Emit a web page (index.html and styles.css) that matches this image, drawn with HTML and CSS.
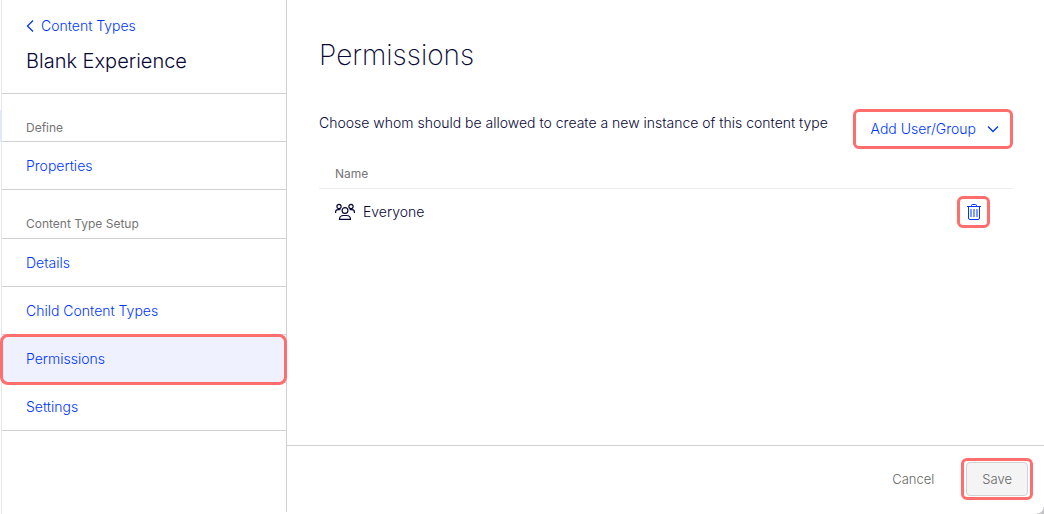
FILE: index.html
```html
<!DOCTYPE html>
<html lang="en">
<head>
    <meta charset="utf-8">
    <title>Blank Experience - Permissions</title>
    <link rel="stylesheet" href="styles.css">
</head>
<body>
    <div class="page">
        <aside class="sidebar">
            <header class="sidebar-header">
                <a class="back-link" href="#">
                    <svg class="icon-back" viewBox="0 0 8 12"><path d="M7 .5 1.500 6 7 11.500"/></svg>
                    Content Types
                </a>
                <h2 class="type-name">Blank Experience</h2>
            </header>
            <nav>
                <h3 class="nav-title">Define</h3>
                <a class="nav-item" href="#">Properties</a>
                <h3 class="nav-title nav-title-setup">Content Type Setup</h3>
                <a class="nav-item" href="#">Details</a>
                <a class="nav-item" href="#">Child Content Types</a>
                <a class="nav-item active" href="#">Permissions</a>
                <a class="nav-item" href="#">Settings</a>
            </nav>
        </aside>
        <main class="main">
            <div class="content">
                <h1>Permissions</h1>
                <div class="intro">
                    <p>Choose whom should be allowed to create a new instance of this content type</p>
                    <button type="button" class="add-button marked">
                        Add User/Group
                        <svg class="icon-down" viewBox="0 0 12 8"><path d="M1 1.500l5 5 5-5"/></svg>
                    </button>
                </div>
                <table class="users">
                    <thead>
                        <tr>
                            <th>Name</th>
                            <th></th>
                        </tr>
                    </thead>
                    <tbody>
                        <tr>
                            <td>
                                <div class="user">
                                    <svg class="icon-group" viewBox="0 0 20 18">
                                        <circle cx="4" cy="3.500" r="2.100"/>
                                        <circle cx="16" cy="3.500" r="2.100"/>
                                        <circle cx="10" cy="7.500" r="2.900"/>
                                        <path d="M.6 10V9c0-1.400 1-2.400 2.400-2.400h2.400M19.400 10V9c0-1.400-1-2.400-2.400-2.400h-2.400M4.500 16.400c0-2.500 1.800-3.900 4-3.900h3c2.200 0 4 1.400 4 3.900z"/>
                                    </svg>
                                    Everyone
                                </div>
                            </td>
                            <td class="actions">
                                <button type="button" class="delete-button marked" aria-label="Delete">
                                    <svg class="icon-trash" viewBox="0 0 14 16">
                                        <path d="M0 2.500h14M4.500 2.500V1.500q0-1 1-1h3q1 0 1 1v1M1.500 2.500v11.500q0 1.500 1.500 1.500h8q1.500 0 1.500-1.500V2.500"/>
                                        <path class="slats" d="M4 5v8M7 5v8M10 5v8"/>
                                    </svg>
                                </button>
                            </td>
                        </tr>
                    </tbody>
                </table>
            </div>
            <footer class="footer">
                <button type="button" class="cancel-button">Cancel</button>
                <div class="save-box marked">
                    <button type="button" class="save-button">Save</button>
                </div>
            </footer>
        </main>
    </div>
</body>
</html>
```

FILE: styles.css
```css
* {
    box-sizing: border-box;
}

body {
    margin: 0;
    font-family: Inter, "Liberation Sans", sans-serif;
    font-size: 14px;
    font-weight: 300;
    line-height: 20px;
    color: #080736;
    background-color: #fff;
}

h1, h2, h3, p {
    margin: 0;
    font-weight: 300;
}

a {
    color: #0037ff;
    text-decoration: none;
}

button {
    font: inherit;
    background: none;
    border: none;
    padding: 0;
    cursor: pointer;
}

svg {
    fill: none;
    stroke: currentColor;
}

.page {
    position: relative;
    display: flex;
    min-height: 100vh;
    margin-left: 1px;
    padding-bottom: 2px;
    border-left: 1px solid #e5e6ea;
}

/* edge of the selected item in the panel behind */
.page::before {
    content: "";
    position: absolute;
    top: 110px;
    left: -2px;
    width: 2px;
    height: 32px;
    background-color: #e3e8ff;
}

/* resize corner */
.page::after {
    content: "";
    position: absolute;
    right: 0;
    bottom: 0;
    width: 7px;
    height: 7px;
    background: radial-gradient(circle at 0 0, transparent 6px, #c4c4c6 7px);
}

.sidebar {
    width: 285px;
    flex-shrink: 0;
    border-right: 1px solid #d0d1d3;
}

.sidebar-header {
    padding: 16px 24px 18px;
    border-bottom: 1px solid #d0d1d3;
}

.back-link {
    display: flex;
    align-items: center;
    gap: 7px;
}

.icon-back {
    width: 8px;
    height: 12px;
    stroke-width: 1.3;
}

.type-name {
    margin-top: 11px;
    font-size: 20px;
    line-height: 28px;
}

.nav-title {
    height: 48px;
    padding: 24px 24px 0;
    font-size: 12px;
    font-weight: 400;
    color: #757575;
    border-bottom: 1px solid #d0d1d3;
}

.nav-title-setup {
    height: 49px;
}

.nav-item {
    position: relative;
    display: block;
    height: 48px;
    padding: 14px 24px;
    border-bottom: 1px solid #d0d1d3;
}

.active {
    background-color: #eff1ff;
}

.active::after {
    content: "";
    position: absolute;
    inset: -1px -1px -3px -2px;
    border: 3px solid #ff6d6d;
    border-radius: 8px;
}

.marked {
    border: 3px solid #ff6d6d;
    border-radius: 6px;
}

.main {
    flex: 1;
    display: flex;
    flex-direction: column;
}

.content {
    flex: 1;
    padding: 35px 31px 0 32px;
}

h1 {
    font-size: 28px;
    font-weight: 200;
    line-height: 40px;
}

.intro {
    display: flex;
    justify-content: space-between;
    align-items: flex-start;
    margin-top: 34px;
}

.intro p {
    margin-top: 4px;
}

.add-button {
    display: flex;
    align-items: center;
    gap: 11px;
    height: 40px;
    padding: 0 11px 0 15px;
    color: #0037ff;
}

.icon-down {
    width: 12px;
    height: 8px;
    stroke-width: 1.3;
}

.users {
    width: 100%;
    margin-top: 12px;
    border-collapse: collapse;
}

.users th {
    height: 27px;
    padding: 0 16px;
    font-size: 12px;
    font-weight: 400;
    text-align: left;
    color: #757575;
    border-bottom: 1px solid #eeeef0;
}

.users td {
    height: 48px;
    padding: 0 16px;
}

.user {
    display: flex;
    align-items: center;
    gap: 8px;
}

.icon-group {
    width: 20px;
    height: 18px;
    stroke-width: 1.2;
}

.users .actions {
    padding-right: 23px;
}

.delete-button {
    display: flex;
    align-items: center;
    justify-content: center;
    width: 33px;
    height: 32px;
    margin-left: auto;
    color: #0037ff;
}

.icon-trash {
    width: 14px;
    height: 16px;
}

.slats {
    stroke: #8099ff;
    stroke-width: 2;
}

.footer {
    display: flex;
    justify-content: flex-end;
    align-items: center;
    gap: 27px;
    padding: 12px 11px;
    border-top: 1px solid #d0d1d3;
    font-size: 13px;
}

.cancel-button {
    color: #666;
}

.save-box {
    padding: 1px 2px;
}

.save-button {
    height: 34px;
    padding: 0 15px;
    color: #666;
    background-color: #f4f4f4;
    border: 1px solid #d0d1d3;
    border-radius: 4px;
}
```
